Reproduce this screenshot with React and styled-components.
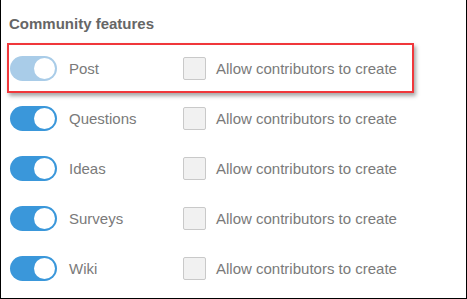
import React from "react";
import styled, { createGlobalStyle } from "styled-components";

const Global = createGlobalStyle`
  html, body { margin: 0; padding: 0; background: #fff; }
  body { font-family: "Liberation Sans", Arial, sans-serif; }
`;

const Frame = styled.div`
  box-sizing: border-box;
  width: 467px;
  height: 299px;
  border: 1px solid #000;
  border-top: none;
  background: #fff;
  padding: 14px 0 0 6px;
  overflow: hidden;
`;

const Title = styled.h2`
  margin: 0 0 9px 2px;
  font-size: 15px;
  font-weight: bold;
  color: #666;
  line-height: 20px;
`;

const List = styled.div`
  display: flex;
  flex-direction: column;
`;

const Row = styled.div`
  box-sizing: border-box;
  width: 407px;
  height: 50px;
  display: flex;
  align-items: center;
  border: 2px solid ${(p) => (p.$highlight ? "#f0373b" : "transparent")};
  box-shadow: ${(p) => (p.$highlight ? "2px 3px 4px rgba(0,0,0,0.35)" : "none")};
  padding-left: 1px;
`;

const Track = styled.span`
  box-sizing: border-box;
  width: 47px;
  height: 25px;
  border-radius: 13px;
  background: ${(p) => (p.$muted ? "#a9cce8" : "#3a97da")};
  display: flex;
  align-items: center;
  justify-content: flex-end;
  padding-right: 2px;
  flex-shrink: 0;
`;

const Knob = styled.span`
  width: 21px;
  height: 21px;
  border-radius: 50%;
  background: #fff;
`;

const Label = styled.span`
  width: 114px;
  margin-left: 12px;
  font-size: 15px;
  color: #7a7a7a;
`;

const Checkbox = styled.span`
  box-sizing: border-box;
  width: 23px;
  height: 23px;
  border: 1px solid #c9c9c9;
  border-radius: 2px;
  background: #f1f1f1;
  flex-shrink: 0;
`;

const CheckText = styled.span`
  margin-left: 10px;
  font-size: 15px;
  color: #7a7a7a;
  white-space: nowrap;
`;

const features = [
  { name: "Post", muted: true, highlight: true },
  { name: "Questions" },
  { name: "Ideas" },
  { name: "Surveys" },
  { name: "Wiki" },
];

export default function App() {
  return (
    <>
      <Global />
      <Frame>
        <Title>Community features</Title>
        <List>
          {features.map((f) => (
            <Row key={f.name} $highlight={f.highlight}>
              <Track $muted={f.muted}>
                <Knob />
              </Track>
              <Label>{f.name}</Label>
              <Checkbox />
              <CheckText>Allow contributors to create</CheckText>
            </Row>
          ))}
        </List>
      </Frame>
    </>
  );
}
